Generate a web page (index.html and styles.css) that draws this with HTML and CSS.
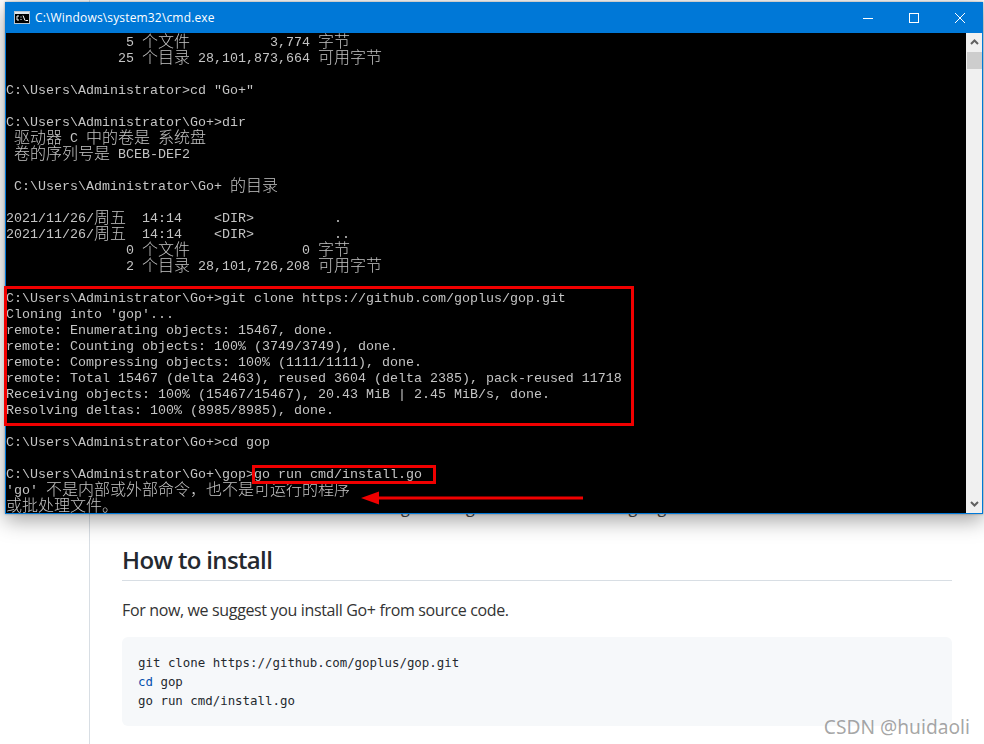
FILE: index.html
```html
<!DOCTYPE html>
<html lang="zh-CN">
<head>
<meta charset="utf-8">
<title>cmd.exe over Go+ README</title>
<link rel="stylesheet" href="styles.css">
</head>
<body>
<main class="article">
  <p class="hidden-line">The Go+ is an art for the best of all <span class="hl-a">engineering</span><span class="hl-b"> and data science </span><span class="hl-c">language</span></p>
  <h2 class="heading">How to install</h2>
  <p class="para">For now, we suggest you install Go+ from source code.</p>
  <div class="code">
    <div>git clone https://github.com/goplus/gop.git</div>
    <div><span class="kw">cd</span> gop</div>
    <div>go run cmd/install.go</div>
  </div>
</main>

<section class="window">
  <header class="titlebar">
    <svg class="app-icon" width="16" height="13" viewBox="0 0 16 13">
      <rect x="0.5" y="0.5" width="15" height="12" fill="#000" stroke="#b8c4cf"/>
      <rect x="1" y="1" width="14" height="2" fill="#dfe6ec"/>
      <path d="M5 5H3V9H5M7 5.5V6.5M7 8V9M9 4.5L11 9.5M11.5 9.5H14" fill="none" stroke="#fff" stroke-width="1"/>
    </svg>
    <span class="title">C:\Windows\system32\cmd.exe</span>
    <div class="controls">
      <svg class="ctl" width="46" height="30" viewBox="0 0 46 30"><path d="M18 15.5H28" stroke="#fff" fill="none"/></svg>
      <svg class="ctl" width="46" height="30" viewBox="0 0 46 30"><rect x="18.5" y="10.5" width="9" height="9" stroke="#fff" fill="none"/></svg>
      <svg class="ctl" width="46" height="30" viewBox="0 0 46 30"><path d="M18 10L28 20M28 10L18 20" stroke="#fff" fill="none"/></svg>
    </div>
  </header>
  <div class="client">
    <div class="console">
      <div class="l">               5 <span class="z">个文件</span>          3,774 <span class="z">字节</span></div>
      <div class="l">              25 <span class="z">个目录</span> 28,101,873,664 <span class="z">可用字节</span></div>
      <div class="l"></div>
      <div class="l">C:\Users\Administrator&gt;cd "Go+"</div>
      <div class="l"></div>
      <div class="l">C:\Users\Administrator\Go+&gt;dir</div>
      <div class="l"> <span class="z">驱动器</span> C <span class="z">中的卷是</span> <span class="z">系统盘</span></div>
      <div class="l"> <span class="z">卷的序列号是</span> BCEB-DEF2</div>
      <div class="l"></div>
      <div class="l"> C:\Users\Administrator\Go+ <span class="z">的目录</span></div>
      <div class="l"></div>
      <div class="l">2021/11/26/<span class="z">周五</span>  14:14    &lt;DIR&gt;          .</div>
      <div class="l">2021/11/26/<span class="z">周五</span>  14:14    &lt;DIR&gt;          ..</div>
      <div class="l">               0 <span class="z">个文件</span>              0 <span class="z">字节</span></div>
      <div class="l">               2 <span class="z">个目录</span> 28,101,726,208 <span class="z">可用字节</span></div>
      <div class="l"></div>
      <div class="l">C:\Users\Administrator\Go+&gt;git clone https://github.com/goplus/gop.git</div>
      <div class="l">Cloning into 'gop'...</div>
      <div class="l">remote: Enumerating objects: 15467, done.</div>
      <div class="l">remote: Counting objects: 100% (3749/3749), done.</div>
      <div class="l">remote: Compressing objects: 100% (1111/1111), done.</div>
      <div class="l">remote: Total 15467 (delta 2463), reused 3604 (delta 2385), pack-reused 11718</div>
      <div class="l">Receiving objects: 100% (15467/15467), 20.43 MiB | 2.45 MiB/s, done.</div>
      <div class="l">Resolving deltas: 100% (8985/8985), done.</div>
      <div class="l"></div>
      <div class="l">C:\Users\Administrator\Go+&gt;cd gop</div>
      <div class="l"></div>
      <div class="l">C:\Users\Administrator\Go+\gop&gt;go run cmd/install.go</div>
      <div class="l">'go' <span class="z">不是内部或外部命令，也不是可运行的程序</span></div>
      <div class="l"><span class="z">或批处理文件。</span></div>
    </div>
    <div class="scrollbar">
      <svg class="arrow" width="16" height="17" viewBox="0 0 16 17"><path d="M5 11L8.5 7.5L12 11" fill="none" stroke="#606060" stroke-width="2"/></svg>
      <div class="thumb"></div>
      <div class="track"></div>
      <svg class="arrow" width="16" height="17" viewBox="0 0 16 17"><path d="M5 6L8.5 9.5L12 6" fill="none" stroke="#606060" stroke-width="2"/></svg>
    </div>
  </div>
</section>

<div class="mark mark-clone"></div>
<div class="mark mark-run"></div>
<svg class="mark-arrow" width="224" height="14" viewBox="0 0 224 14">
  <path d="M0 7L18 0.5V5.5H222V8.5H18V13.5Z" fill="#f00000"/>
</svg>

<div class="watermark">CSDN @huidaoli</div>
</body>
</html>
```
FILE: styles.css
```css
* { box-sizing: border-box; }
html, body { margin: 0; height: 744px; overflow: hidden; background: #fff; }
body { position: relative; font-family: "Open Sans", "Noto Sans", sans-serif; color: #24292f; }

.article {
  margin-left: 89px;
  height: 744px;
  padding: 0 32px;
  border-left: 1px solid #d8dee4;
}
.hidden-line {
  margin: 0;
  padding-top: 496px;
  font-size: 16px;
  line-height: 22px;
  white-space: nowrap;
  overflow: hidden;
  color: #444;
}
.hl-a { letter-spacing: .5px; margin-left: -2px; }
.hl-b { margin-left: -4px; }
.hl-c { letter-spacing: .5px; }
.heading {
  margin: 25px 0 0;
  height: 38px;
  border-bottom: 1px solid #d8dee4;
  font-size: 24px;
  line-height: 34px;
  font-weight: 600;
  letter-spacing: -0.65px;
}
.para {
  margin: 16px 0 0;
  font-size: 16px;
  line-height: 26px;
  letter-spacing: -0.35px;
  color: #333;
}
.code {
  margin-top: 14px;
  height: 89px;
  padding: 16px;
  background: #f6f8fa;
  border-radius: 6px;
  font-family: "DejaVu Sans Mono", monospace;
  font-size: 12.42px;
  line-height: 19px;
  color: #24292f;
}
.kw { color: #0550ae; }

.window {
  position: absolute;
  left: 5px;
  top: 2px;
  width: 978px;
  height: 512px;
  display: flex;
  flex-direction: column;
  border: 1px solid #0078d7;
  border-top: 0;
  background: #000;
  box-shadow: 0 0 2px rgba(0, 0, 0, .35), 0 6px 20px rgba(0, 0, 0, .38);
}
.titlebar {
  flex: none;
  height: 31px;
  display: flex;
  align-items: center;
  background: #0078d7;
  color: #fff;
  padding-left: 8px;
}
.app-icon { flex: none; margin-right: 5px; }
.title { font-size: 12px; letter-spacing: 0.16px; white-space: nowrap; }
.controls { margin-left: auto; display: flex; margin-right: -1px; }
.ctl { display: block; }

.client { flex: 1; display: flex; min-height: 0; }
.console {
  flex: 1;
  overflow: hidden;
  will-change: transform;
  font-family: "Liberation Mono", monospace;
  font-size: 13.33px;
  color: #c4c4c4;
}
.l { height: 16px; padding-top: 2px; line-height: 16px; white-space: pre; }
.z {
  font-family: "Noto Sans CJK SC", sans-serif;
  font-size: 16px;
  line-height: 0;
  vertical-align: -1px;
  font-weight: 300;
}
.scrollbar {
  flex: none;
  width: 16px;
  display: flex;
  flex-direction: column;
  background: #f0f0f0;
}
.arrow { display: block; flex: none; }
.thumb { flex: none; height: 17px; margin: 2px 0 0 1px; background: #cdcdcd; }
.track { flex: 1; }

.mark { position: absolute; border: 3px solid #f00000; }
.mark-clone { left: 4px; top: 286px; width: 630px; height: 140px; }
.mark-run { left: 252px; top: 465px; width: 184px; height: 19px; }
.mark-arrow { position: absolute; left: 361px; top: 491px; }

.watermark {
  position: absolute;
  right: 14px;
  top: 714px;
  font-family: "Noto Sans", sans-serif;
  font-size: 19.2px;
  line-height: 26px;
  color: rgba(90, 90, 90, .55);
  white-space: nowrap;
}
```
